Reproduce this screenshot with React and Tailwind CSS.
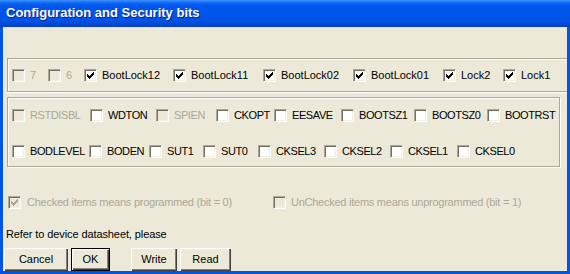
import React from "react";

function Check({ color }) {
  return (
    <svg
      width="7"
      height="7"
      viewBox="0 0 7 7"
      className="absolute left-[2px] top-[2px]"
      shapeRendering="crispEdges"
    >
      <path
        fill={color}
        d="M6 0h1v1h-1z M5 1h2v1h-2z M0 2h1v1h-1z M4 2h3v1h-3z M0 3h2v1h-2z M3 3h3v1h-3z M0 4h5v1h-5z M1 5h3v1h-3z M2 6h1v1h-1z"
      />
    </svg>
  );
}

function Box({ checked, disabled }) {
  return (
    <span
      className={
        "relative block w-[13px] h-[13px] shrink-0 border border-t-[#ACA899] border-l-[#ACA899] border-b-white border-r-white shadow-[inset_1px_1px_0_#716F64,inset_-1px_-1px_0_#F1EFE2] " +
        (disabled ? "bg-[#ECE9D8]" : "bg-white")
      }
    >
      {checked && <Check color={disabled ? "#ACA899" : "#000000"} />}
    </span>
  );
}

function Item({ label, w, checked, disabled }) {
  const caps = label.length > 1 && label === label.toUpperCase();
  return (
    <div className="flex items-center shrink-0" style={w ? { width: w } : undefined}>
      <Box checked={checked} disabled={disabled} />
      <span
        className={
          "ml-[5px] leading-[13px] whitespace-nowrap " +
          (caps ? "tracking-[-0.4px] " : "") +
          (disabled ? "text-[#ACA899]" : "text-black")
        }
      >
        {label}
      </span>
    </div>
  );
}

function Btn({ children, w, def }) {
  return (
    <div
      className={
        "h-[23px] flex items-center justify-center bg-[#ECE9D8] " +
        (def
          ? "border border-black shadow-[inset_1px_1px_0_#FFFFFF,inset_-1px_-1px_0_#404040,inset_-2px_-2px_0_#808080]"
          : "shadow-[inset_1px_1px_0_#FFFFFF,inset_-1px_-1px_0_#404040,inset_-2px_-2px_0_#808080]")
      }
      style={{ width: w }}
    >
      <span className="leading-[13px] text-black">{children}</span>
    </div>
  );
}

const row1 = [
  ["7", 36, false, true],
  ["6", 36, false, true],
  ["BootLock12", 89, true, false],
  ["BootLock11", 90, true, false],
  ["BootLock02", 90, true, false],
  ["BootLock01", 90, true, false],
  ["Lock2", 60, true, false],
  ["Lock1", null, true, false],
];

const row2 = [
  ["RSTDISBL", 78, false, true],
  ["WDTON", 66, false, false],
  ["SPIEN", 60, false, true],
  ["CKOPT", 58, false, false],
  ["EESAVE", 67, false, false],
  ["BOOTSZ1", 73, false, false],
  ["BOOTSZ0", 73, false, false],
  ["BOOTRST", null, false, false],
];

const row3 = [
  ["BODLEVEL", 77, false, false],
  ["BODEN", 60, false, false],
  ["SUT1", 54, false, false],
  ["SUT0", 55, false, false],
  ["CKSEL3", 66, false, false],
  ["CKSEL2", 66, false, false],
  ["CKSEL1", 67, false, false],
  ["CKSEL0", null, false, false],
];

export default function App() {
  return (
    <div
      className="w-[570px] h-[274px] overflow-hidden flex flex-col bg-[#0055E5] text-[11px]"
      style={{ fontFamily: '"Liberation Sans", Arial, sans-serif' }}
    >
      <div className="h-[27px] shrink-0 flex items-center pl-[6px] bg-[linear-gradient(to_bottom,#3C95FF_0%,#1A6EF8_8%,#0058EE_18%,#0055EA_50%,#0052E3_80%,#0046D2_92%,#0A3EC0_100%)]">
        <span className="text-white font-bold text-[13px] leading-[16px] pb-[1px] [text-shadow:1px_1px_0_#0A1E8C]">
          Configuration and Security bits
        </span>
      </div>
      <div className="flex-1 mx-[3px] mb-[3px] bg-[#ECE9D8] flex flex-col">
        <div className="mt-[31px] ml-[4px] h-[34px] shrink-0 border border-r-0 border-[#ACA899] shadow-[inset_1px_1px_0_#FFFFFF,0_1px_0_#FFFFFF] flex items-center pl-[4px]">
          {row1.map(([l, w, c, d]) => (
            <Item key={l} label={l} w={w} checked={c} disabled={d} />
          ))}
        </div>
        <div className="mt-[5px] ml-[4px] w-[553px] h-[70px] shrink-0 border border-[#ACA899] shadow-[inset_1px_1px_0_#FFFFFF,1px_1px_0_#FFFFFF] flex flex-col pt-[11px] gap-[23px] pl-[4px]">
          <div className="flex items-center h-[13px]">
            {row2.map(([l, w, c, d]) => (
              <Item key={l} label={l} w={w} checked={c} disabled={d} />
            ))}
          </div>
          <div className="flex items-center h-[13px]">
            {row3.map(([l, w, c, d]) => (
              <Item key={l} label={l} w={w} checked={c} disabled={d} />
            ))}
          </div>
        </div>
        <div className="mt-[29px] h-[13px] shrink-0 flex items-center pl-[5px]">
          <div className="flex items-center w-[265px]">
            <Box checked disabled />
            <span className="ml-[6px] leading-[13px] tracking-[-0.25px] text-[#ACA899] whitespace-nowrap">
              Checked items means programmed (bit = 0)
            </span>
          </div>
          <div className="flex items-center">
            <Box disabled />
            <span className="ml-[5px] leading-[13px] tracking-[-0.25px] text-[#ACA899] whitespace-nowrap">
              UnChecked items means unprogrammed (bit = 1)
            </span>
          </div>
        </div>
        <div className="mt-[19px] h-[13px] shrink-0 pl-[3px] leading-[13px] tracking-[-0.1px] text-black">
          Refer to device datasheet, please
        </div>
        <div className="mt-[7px] h-[23px] shrink-0 flex items-center pl-[1px]">
          <Btn w={64}>Cancel</Btn>
          <div className="w-[3px]" />
          <Btn w={39} def>
            OK
          </Btn>
          <div className="w-[21px]" />
          <Btn w={46}>Write</Btn>
          <div className="w-[3px]" />
          <Btn w={51}>Read</Btn>
        </div>
      </div>
    </div>
  );
}
